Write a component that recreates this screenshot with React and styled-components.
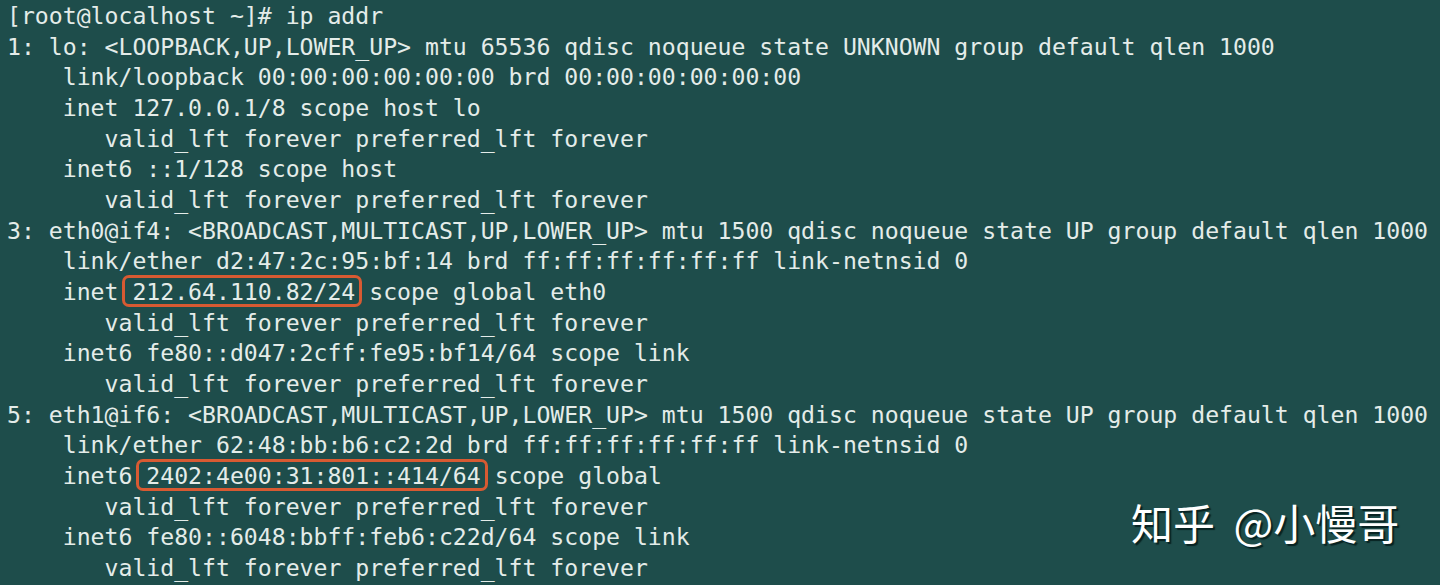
import React from "react";
import styled, { createGlobalStyle } from "styled-components";

const GlobalStyle = createGlobalStyle`
  html, body {
    margin: 0;
    padding: 0;
    background: #1e4d4b;
  }
`;

const lines = [
  "[root@localhost ~]# ip addr",
  "1: lo: <LOOPBACK,UP,LOWER_UP> mtu 65536 qdisc noqueue state UNKNOWN group default qlen 1000",
  "    link/loopback 00:00:00:00:00:00 brd 00:00:00:00:00:00",
  "    inet 127.0.0.1/8 scope host lo",
  "       valid_lft forever preferred_lft forever",
  "    inet6 ::1/128 scope host",
  "       valid_lft forever preferred_lft forever",
  "3: eth0@if4: <BROADCAST,MULTICAST,UP,LOWER_UP> mtu 1500 qdisc noqueue state UP group default qlen 1000",
  "    link/ether d2:47:2c:95:bf:14 brd ff:ff:ff:ff:ff:ff link-netnsid 0",
  ["    inet ", "212.64.110.82/24", " scope global eth0"],
  "       valid_lft forever preferred_lft forever",
  "    inet6 fe80::d047:2cff:fe95:bf14/64 scope link",
  "       valid_lft forever preferred_lft forever",
  "5: eth1@if6: <BROADCAST,MULTICAST,UP,LOWER_UP> mtu 1500 qdisc noqueue state UP group default qlen 1000",
  "    link/ether 62:48:bb:b6:c2:2d brd ff:ff:ff:ff:ff:ff link-netnsid 0",
  ["    inet6 ", "2402:4e00:31:801::414/64", " scope global"],
  "       valid_lft forever preferred_lft forever",
  "    inet6 fe80::6048:bbff:feb6:c22d/64 scope link",
  "       valid_lft forever preferred_lft forever",
];

export default function App() {
  return (
    <>
      <GlobalStyle />
      <Screen>
        <Output>
          {lines.map((line, i) =>
            Array.isArray(line) ? (
              <Line key={i}>
                {line[0]}
                <Marked>{line[1]}</Marked>
                {line[2]}
              </Line>
            ) : (
              <Line key={i}>{line}</Line>
            )
          )}
        </Output>
        <Watermark>知乎 @小慢哥</Watermark>
      </Screen>
    </>
  );
}

const Screen = styled.div`
  position: relative;
  width: 1440px;
  height: 585px;
  overflow: hidden;
  background: #1e4d4b;
`;

const Output = styled.div`
  display: flex;
  flex-direction: column;
  padding: 1px 0 0 7px;
  font-family: "DejaVu Sans Mono", "Liberation Mono", monospace;
  font-size: 23.15px;
  color: #e4ece9;
`;

const Line = styled.div`
  height: 30.67px;
  line-height: 30.67px;
  white-space: pre;
`;

const Marked = styled.span`
  position: relative;

  &::after {
    content: "";
    position: absolute;
    left: -10px;
    right: -7px;
    top: -4px;
    bottom: -2px;
    border: 3px solid #d85a32;
    border-radius: 7px;
  }
`;

const Watermark = styled.div`
  position: absolute;
  left: 1131px;
  top: 494px;
  font-family: "Noto Sans CJK SC", "Noto Sans", sans-serif;
  font-size: 42px;
  line-height: 56px;
  word-spacing: 9px;
  color: #ffffff;
  white-space: pre;
  text-shadow: 2px 2px 1px rgba(0, 20, 20, 0.75);
`;
